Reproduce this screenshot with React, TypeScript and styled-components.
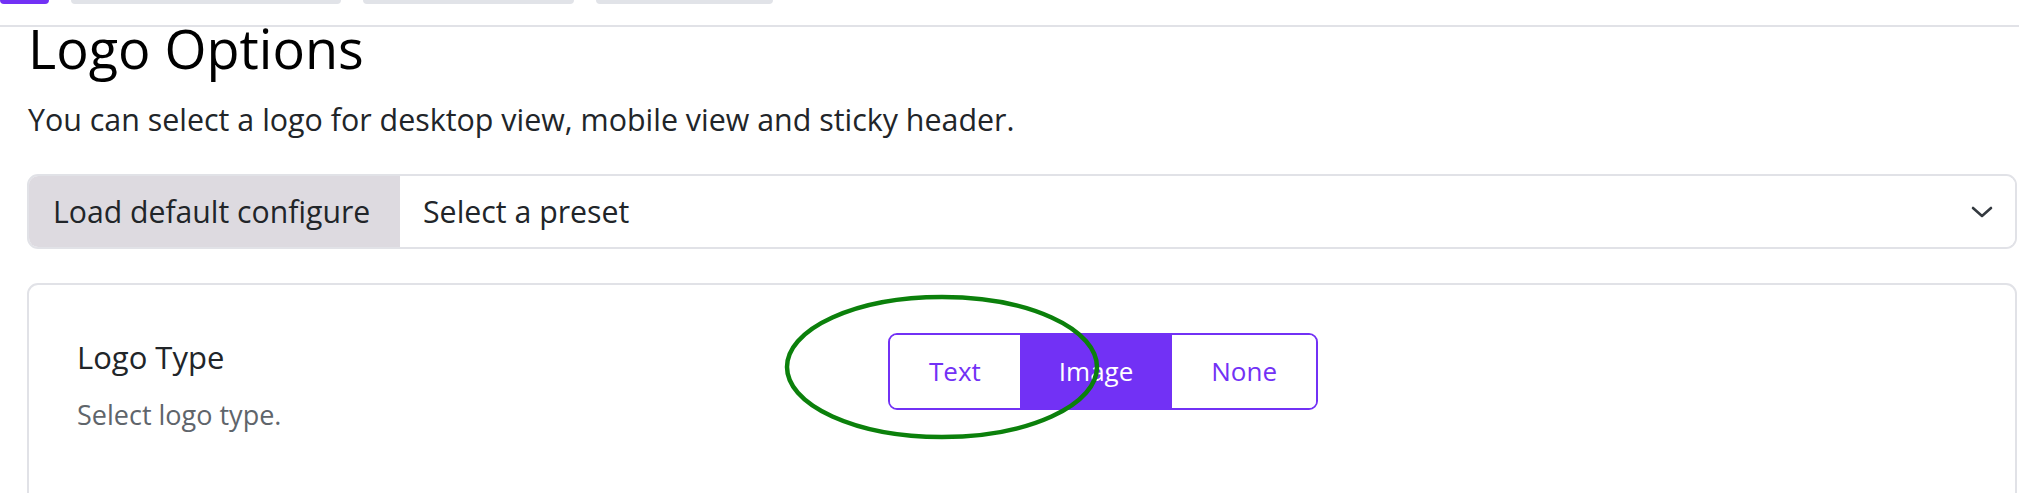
import React from 'react'
import styled, { createGlobalStyle } from 'styled-components'

const GlobalStyle = createGlobalStyle`
  html, body {
    margin: 0;
    padding: 0;
    background: #ffffff;
  }
  body {
    font-family: "Open Sans", "Noto Sans", sans-serif;
    color: #212529;
    overflow: hidden;
  }
  * {
    box-sizing: border-box;
  }
`

const tabs = [
  { width: 49, active: true },
  { width: 270, active: false },
  { width: 211, active: false },
  { width: 177, active: false },
]

const logoTypes = ['Text', 'Image', 'None']

export default function App() {
  const selected = 'Image'

  return (
    <>
      <GlobalStyle />
      <TopNav>
        <TabRow>
          {tabs.map((tab, i) => (
            <Tab key={i} $width={tab.width} $active={tab.active} />
          ))}
        </TabRow>
      </TopNav>
      <Main>
        <Title>Logo Options</Title>
        <Lead>You can select a logo for desktop view, mobile view and sticky header.</Lead>
        <InputGroup>
          <Addon>Load default configure</Addon>
          <Select>
            <span>Select a preset</span>
            <Chevron width="22" height="12" viewBox="0 0 22 12">
              <path d="M2 2 L11 10 L20 2" fill="none" stroke="#343a40" strokeWidth="2.6" strokeLinecap="round" strokeLinejoin="round" />
            </Chevron>
          </Select>
        </InputGroup>
        <Card>
          <CardBody>
            <LabelBlock>
              <FieldLabel>Logo Type</FieldLabel>
              <FieldHelp>Select logo type.</FieldHelp>
            </LabelBlock>
            <ButtonGroup>
              {logoTypes.map((t) => (
                <ToggleButton key={t} $active={t === selected}>
                  {t}
                </ToggleButton>
              ))}
            </ButtonGroup>
          </CardBody>
          <Annotation width="320" height="150" viewBox="0 0 320 150">
            <ellipse cx="160" cy="75" rx="155" ry="70" fill="none" stroke="#0b800b" strokeWidth="4.5" />
          </Annotation>
        </Card>
      </Main>
    </>
  )
}

const TopNav = styled.div`
  height: 27px;
  border-bottom: 2px solid #e1e2e7;
`

const TabRow = styled.div`
  display: flex;
  gap: 22px;
  align-items: flex-start;
`

const Tab = styled.div<{ $width: number; $active: boolean }>`
  width: ${(p) => p.$width}px;
  height: 4px;
  border-radius: 0 0 6px 6px;
  background: ${(p) => (p.$active ? '#7231f5' : '#e1e3e8')};
`

const Main = styled.div`
  padding: 0 2px 0 27px;
`

const Title = styled.h1`
  margin: 0;
  font-size: 54px;
  font-weight: 400;
  line-height: 42px;
  color: #000000;
  padding-left: 1px;
`

const Lead = styled.p`
  margin: 28px 0 0;
  font-size: 30.4px;
  line-height: 45px;
  color: #212529;
  padding-left: 1px;
`

const InputGroup = styled.div`
  margin-top: 32px;
  display: flex;
  height: 75px;
  border: 2px solid #e1e2e7;
  border-radius: 11px;
  overflow: hidden;
`

const Addon = styled.div`
  display: flex;
  align-items: center;
  padding: 0 20px 0 24px;
  width: 371px;
  background: #dddae0;
  font-size: 30.2px;
  color: #212529;
  white-space: nowrap;
`

const Select = styled.div`
  flex: 1;
  display: flex;
  align-items: center;
  justify-content: space-between;
  padding: 0 22px 0 23px;
  font-size: 30.3px;
  color: #212529;
  background: #ffffff;
`

const Chevron = styled.svg`
  display: block;
`

const Card = styled.div`
  position: relative;
  margin-top: 34px;
  height: 240px;
  border: 2px solid #e1e2e7;
  border-radius: 11px;
`

const CardBody = styled.div`
  display: flex;
  align-items: flex-start;
  padding: 48px 0 0 48px;
`

const LabelBlock = styled.div`
  width: 811px;
  padding-top: 2px;
`

const FieldLabel = styled.div`
  font-size: 31px;
  line-height: 44px;
  color: #212529;
`

const FieldHelp = styled.div`
  margin-top: 16px;
  font-size: 27px;
  line-height: 40px;
  color: #5f656b;
`

const ButtonGroup = styled.div`
  display: flex;
  border: 2px solid #7231f5;
  border-radius: 9px;
  overflow: hidden;
`

const ToggleButton = styled.button<{ $active: boolean }>`
  font-family: inherit;
  font-size: 26px;
  line-height: 39px;
  padding: 17px 39px;
  border: none;
  background: ${(p) => (p.$active ? '#7231f5' : '#ffffff')};
  color: ${(p) => (p.$active ? '#ffffff' : '#7231f5')};
  cursor: pointer;
`

const Annotation = styled.svg`
  position: absolute;
  left: 753px;
  top: 7px;
  pointer-events: none;
`
